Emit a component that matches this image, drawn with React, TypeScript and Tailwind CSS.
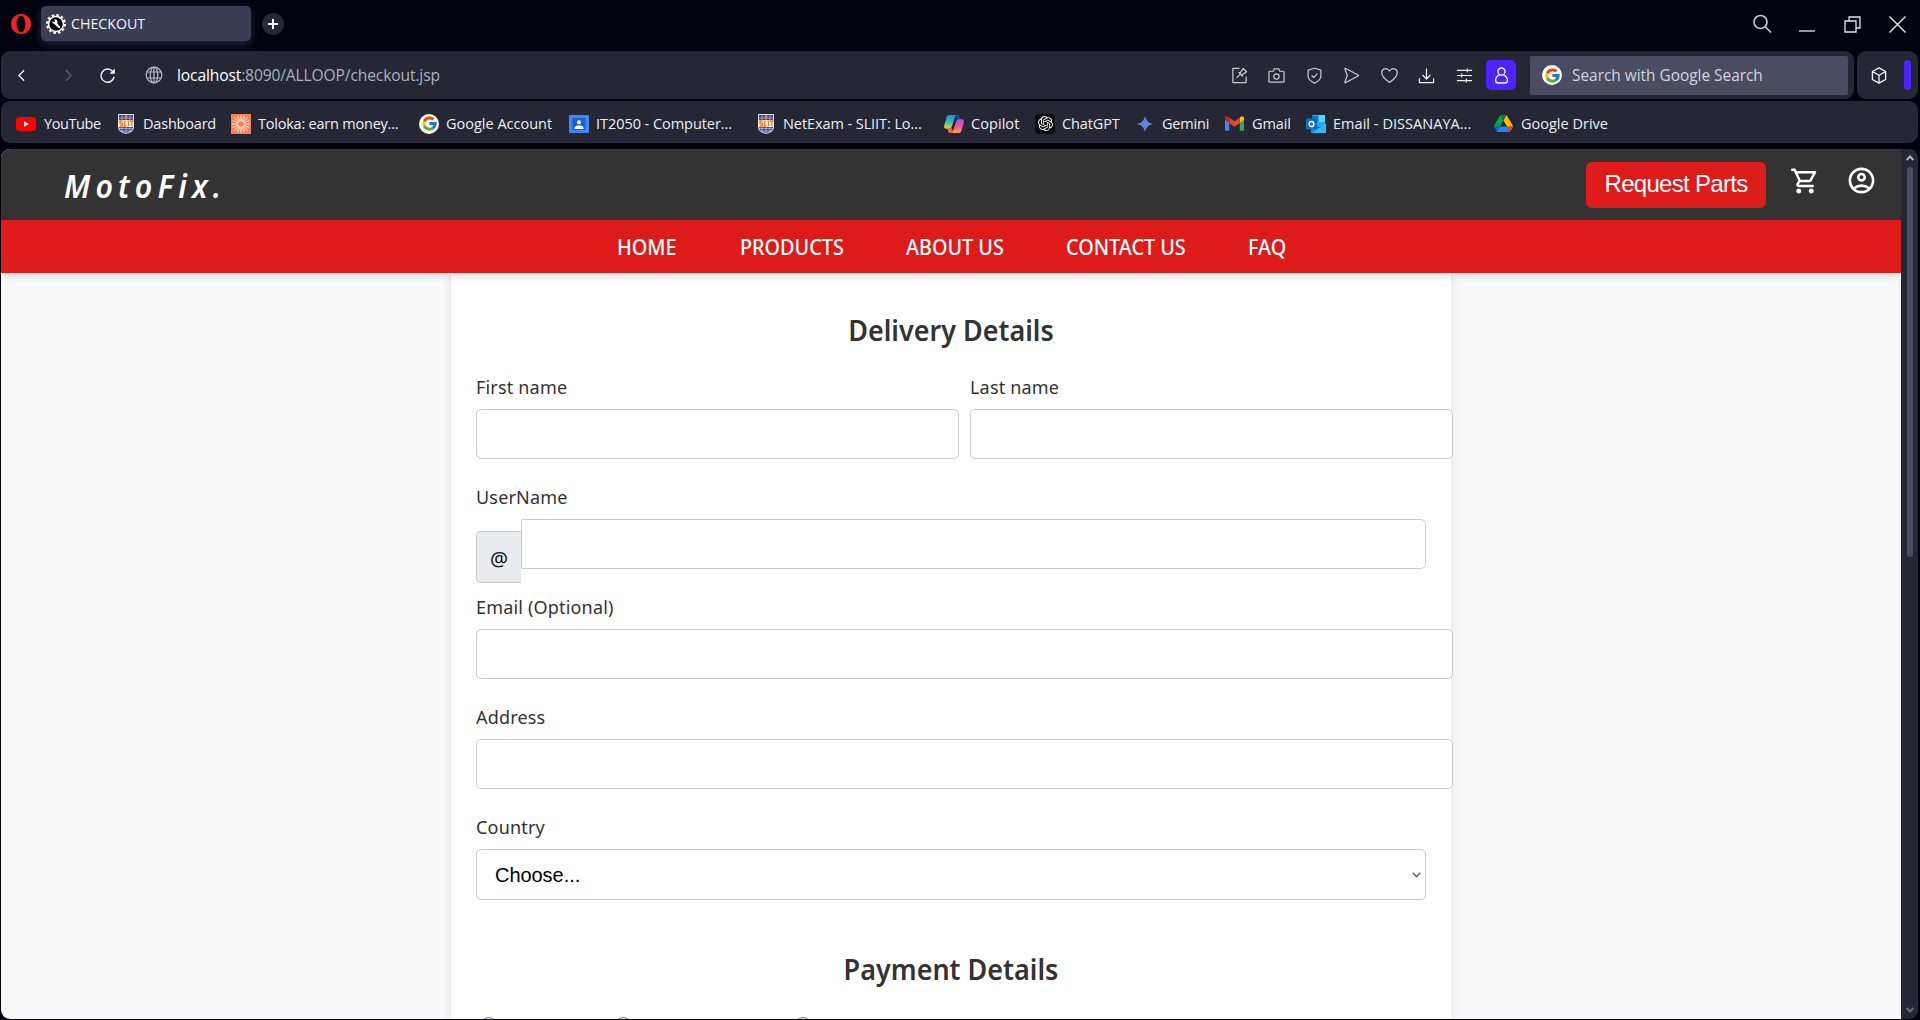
import type { ReactNode } from 'react';
import { MdOutlineShoppingCart, MdOutlineAccountCircle } from 'react-icons/md';
import { FcGoogle } from 'react-icons/fc';
import { SiOpenai } from 'react-icons/si';

const OperaLogo = () => (
  <svg viewBox="0 0 20 20" className="h-5 w-5">
    <path
      fillRule="evenodd"
      fill="#fa1e2d"
      d="M10 0C4.2 0 0 4.5 0 10s4.2 10 10 10 10-4.500 10-10S15.800 0 10 0ZM10 1.800c2.700 0 4.400 3.500 4.400 8.200s-1.700 8.200-4.400 8.200-4.400-3.500-4.400-8.200 1.700-8.200 4.400-8.200Z"
    />
  </svg>
);

const GearFavicon = () => (
  <svg viewBox="0 0 20 20" className="h-5 w-5">
    <circle cx="10" cy="10" r="8.900" fill="none" stroke="#fff" strokeWidth="2.200" strokeDasharray="2.600 2.060" />
    <circle cx="10" cy="10" r="7.400" fill="#000" stroke="#fff" strokeWidth="1.500" />
    <path d="M9.500 9.500l3.500 3.500" stroke="#fff" strokeWidth="2.400" strokeLinecap="round" />
    <path d="M6.200 7.300l2 .8.900-.9-1-2a3 3 0 0 1 3.200 4.200 3 3 0 0 1-5.100-2.100Z" fill="#fff" />
  </svg>
);

const YouTubeIcon = () => (
  <svg viewBox="0 0 20 14" className="h-[14px] w-5">
    <rect width="20" height="14" rx="3.500" fill="#f00" />
    <path d="M8 4.200v5.600l4.800-2.800Z" fill="#fff" />
  </svg>
);

const ShieldCrest = () => (
  <svg viewBox="0 0 16 20" className="h-5 w-4">
    <path d="M0 0h16v13c0 4-4 6-8 7-4-1-8-3-8-7Z" fill="#d9d9e8" />
    <path d="M1 1h14v12c0 3.500-3.500 5-7 6-3.500-1-7-2.500-7-6Z" fill="#39409a" />
    <path d="M4 1v17M8 1v18M12 1v17M1 4h14M1 14.500h14M3 17h10" stroke="#c4c6dc" strokeWidth=".7" />
    <circle cx="8" cy="3" r="1.800" fill="#f08222" />
    <rect y="6" width="16" height="7" fill="#f7e9de" />
    <path d="M4.500 7H2v2.500h2.500V12H1.800M6.700 6.500V12h1.800M10.500 6.500V12M12 7h3.500M13.800 7v5" stroke="#ee7d24" strokeWidth="1.300" fill="none" />
  </svg>
);

const TolokaIcon = () => (
  <svg viewBox="0 0 20 20" className="h-5 w-5">
    <rect width="20" height="20" fill="#ff7f50" />
    <g stroke="#ffe3d6" strokeWidth="1.100">
      <path d="M10 1v18M1 10h18M3.600 3.600l12.800 12.800M16.400 3.600L3.600 16.400M6.500 1.700l7 16.600M13.500 1.700l-7 16.600M1.700 6.500l16.600 7M1.700 13.500l16.600-7" />
    </g>
    <circle cx="10" cy="10" r="2.800" fill="#ff7f50" />
  </svg>
);

const GoogleBadge = () => (
  <span className="flex h-5 w-5 items-center justify-center rounded-full bg-white">
    <FcGoogle size={17} />
  </span>
);

const ClassroomIcon = () => (
  <svg viewBox="0 0 20 18" className="h-[18px] w-5">
    <rect width="20" height="18" rx="1" fill="#4285f4" />
    <rect x="3.500" y="3" width="13" height="12" fill="#1a5fd0" />
    <circle cx="10" cy="7.200" r="2" fill="#fff" />
    <path d="M5.500 14v-1c0-1.800 2.300-2.700 4.500-2.700s4.500.9 4.500 2.700v1Z" fill="#fff" />
  </svg>
);

const CopilotIcon = () => (
  <svg viewBox="0 0 20 18" className="h-[18px] w-5">
    <defs>
      <linearGradient id="cpA" x1="0" y1="0" x2="0" y2="1">
        <stop offset="0" stopColor="#1b8ff2" />
        <stop offset=".5" stopColor="#35bfb2" />
        <stop offset="1" stopColor="#f3d31c" />
      </linearGradient>
      <linearGradient id="cpB" x1="0" y1="0" x2="0" y2="1">
        <stop offset="0" stopColor="#a855f7" />
        <stop offset=".5" stopColor="#ee5090" />
        <stop offset="1" stopColor="#ffa04a" />
      </linearGradient>
    </defs>
    <path d="M12.500 0h1.200c1 0 1.500.7 1.800 1.700l.7 2.300h-3.400Z" fill="#1648b8" />
    <path d="M5.500 0H13c-1 0-1.600.8-2 2L7.800 11.500c-.5 1.500-1.300 2.300-2.800 2.300H2.500C.5 13.800-.3 12.300.2 10.500L2.600 2.300C3 .8 4 0 5.500 0Z" fill="url(#cpA)" />
    <path d="M14.500 18H7c1 0 1.600-.8 2-2l3.200-9.500c.5-1.500 1.300-2.300 2.800-2.300h2.500c2 0 2.800 1.500 2.300 3.300l-2.400 8.200C17 17.200 16 18 14.500 18Z" fill="url(#cpB)" />
    <path d="M7 18H6c-1 0-1.500-.8-1.800-1.700l-.8-2.500h1.700c1 0 1.700-.4 2.200-1.200L9 16c-.4 1.200-1 2-2 2Z" fill="#f46a3a" />
  </svg>
);

const ChatGptIcon = () => (
  <span className="flex h-5 w-5 items-center justify-center rounded bg-[#0d0d0d] text-white">
    <SiOpenai size={15} />
  </span>
);

const GeminiIcon = () => (
  <svg viewBox="0 0 16 16" className="h-4 w-4">
    <defs>
      <linearGradient id="gem" x1="0" y1="1" x2="1" y2="0">
        <stop offset="0" stopColor="#9b72cb" />
        <stop offset=".5" stopColor="#5c84dd" />
        <stop offset="1" stopColor="#4fa0dd" />
      </linearGradient>
    </defs>
    <path d="M8 0c1 4.600 3.400 7 8 8-4.600 1-7 3.400-8 8-1-4.600-3.400-7-8-8 4.600-1 7-3.400 8-8Z" fill="url(#gem)" />
  </svg>
);

const GmailIcon = () => (
  <svg viewBox="0 0 20 15" className="h-[15px] w-[19px]">
    <path d="M0 2v12c0 .6.400 1 1 1h3.500V5.500Z" fill="#4285f4" />
    <path d="M20 2v12c0 .6-.4 1-1 1h-3.500V5.500Z" fill="#34a853" />
    <path d="M15.500 1.200v5.800L20 3.600V2c0-1.800-2-2.600-3.300-1.600Z" fill="#fbbc04" />
    <path d="M4.500 7V1.200L10 5.400l5.500-4.200V7L10 11.200Z" fill="#ea4335" />
    <path d="M0 2v1.600L4.500 7V1.200L3.300.4C2-.6 0 .2 0 2Z" fill="#c5221f" />
  </svg>
);

const OutlookIcon = () => (
  <svg viewBox="0 0 20 18" className="h-[18px] w-5">
    <rect x="6" width="13" height="12" rx="1" fill="#28a8ea" />
    <path d="M6 1h6.500v6H6Z" fill="#0078d4" />
    <path d="M12.500 0H18c.6 0 1 .4 1 1v6h-6.500Z" fill="#50d9ff" />
    <path d="M5 8.500l7.500 4.500L20 8.500V17c0 .6-.4 1-1 1H6c-.6 0-1-.4-1-1Z" fill="#1490df" />
    <path d="M20 8.500L6 18h13c.6 0 1-.4 1-1Z" fill="#35b8f1" />
    <rect y="3.500" width="11" height="11" rx="1" fill="#0f6cbd" />
    <ellipse cx="5.500" cy="9" rx="2.300" ry="2.600" fill="none" stroke="#fff" strokeWidth="1.500" />
  </svg>
);

const DriveIcon = () => (
  <svg viewBox="0 0 87.300 78" className="h-[17px] w-[19px]">
    <path d="m6.600 66.850 3.850 6.650c.8 1.400 1.950 2.500 3.300 3.300l13.750-23.800h-27.500c0 1.550.4 3.100 1.200 4.500z" fill="#0066da" />
    <path d="m43.650 25-13.750-23.800c-1.350.8-2.500 1.900-3.300 3.300l-25.400 44a9.060 9.060 0 0 0 -1.200 4.500h27.500z" fill="#00ac47" />
    <path d="m73.550 76.800c1.350-.8 2.500-1.900 3.300-3.300l1.600-2.750 7.650-13.250c.8-1.400 1.200-2.950 1.200-4.500h-27.502l5.852 11.500z" fill="#ea4335" />
    <path d="m43.650 25 13.750-23.800c-1.350-.8-2.900-1.200-4.500-1.200h-18.500c-1.600 0-3.150.45-4.500 1.200z" fill="#00832d" />
    <path d="m59.800 53h-32.300l-13.750 23.800c1.350.8 2.900 1.200 4.500 1.200h50.800c1.600 0 3.150-.45 4.500-1.200z" fill="#2684fc" />
    <path d="m73.400 26.500-12.700-22c-.8-1.400-1.950-2.500-3.300-3.300l-13.750 23.800 16.150 28h27.450c0-1.550-.4-3.100-1.200-4.500z" fill="#ffba00" />
  </svg>
);

/* Thin line icons of the browser's toolbar, drawn on an 18px grid. */
const Line = ({ children, className = 'text-[#c9cbd3]' }: { children: ReactNode; className?: string }) => (
  <span className={`flex w-[37.500px] shrink-0 justify-center ${className}`}>
    <svg viewBox="0 0 18 18" className="h-[17px] w-[17px] overflow-visible" fill="none" stroke="currentColor" strokeWidth="1.300" strokeLinejoin="round">
      {children}
    </svg>
  </span>
);

const Globe = () => (
  <svg viewBox="0 0 18 18" className="h-[18px] w-[18px] overflow-visible" fill="none" stroke="#b4b7c1" strokeWidth="1.200">
    <circle cx="9" cy="9" r="7.800" />
    <ellipse cx="9" cy="9" rx="3.800" ry="7.800" />
    <path d="M9 1.200v15.600M2 6h14M2 12h14" />
  </svg>
);

type Bookmark = { label: string; icon: ReactNode; item: string; slot: string; text: string };

const bookmarks: Bookmark[] = [
  { label: 'YouTube', icon: <YouTubeIcon />, item: 'w-[102px]', slot: 'w-[28px]', text: 'tracking-[-0.400px]' },
  { label: 'Dashboard', icon: <ShieldCrest />, item: 'w-[113px]', slot: 'w-[25px]', text: 'tracking-[-0.200px]' },
  { label: 'Toloka: earn money...', icon: <TolokaIcon />, item: 'w-[188px]', slot: 'w-[27px]', text: 'tracking-[-0.220px]' },
  { label: 'Google Account', icon: <GoogleBadge />, item: 'w-[150px]', slot: 'w-[27px]', text: 'tracking-[0px]' },
  { label: 'IT2050 - Computer...', icon: <ClassroomIcon />, item: 'w-[189px]', slot: 'w-[27px]', text: 'tracking-[-0.050px]' },
  { label: 'NetExam - SLIIT: Lo...', icon: <ShieldCrest />, item: 'w-[186px]', slot: 'w-[25px]', text: 'tracking-[-0.080px]' },
  { label: 'Copilot', icon: <CopilotIcon />, item: 'w-[91px]', slot: 'w-[27px]', text: 'tracking-[0.060px]' },
  { label: 'ChatGPT', icon: <ChatGptIcon />, item: 'w-[102px]', slot: 'w-[27px]', text: 'tracking-[-0.130px]' },
  { label: 'Gemini', icon: <GeminiIcon />, item: 'w-[88px]', slot: 'w-[25px]', text: 'tracking-[-0.200px]' },
  { label: 'Gmail', icon: <GmailIcon />, item: 'w-[81px]', slot: 'w-[27px]', text: 'tracking-[-0.130px]' },
  { label: 'Email - DISSANAYA...', icon: <OutlookIcon />, item: 'w-[188px]', slot: 'w-[27px]', text: 'tracking-[0.040px]' },
  { label: 'Google Drive', icon: <DriveIcon />, item: 'w-[120px]', slot: 'w-[27px]', text: 'tracking-[0px]' },
];

const TabStrip = () => (
  <div className="flex h-[51px] items-start">
    <div className="mt-[14px] ml-[11px]">
      <OperaLogo />
    </div>
    <div className="mt-[6px] ml-[10px] flex h-[35px] w-[210px] items-center rounded-[5px] bg-[#3a3d53] pl-[5px] shadow-[0_3px_8px_rgba(80,84,112,0.45)]">
      <GearFavicon />
      <span className="ml-[5px] text-[14.200px] text-[#f2f3f6]">CHECKOUT</span>
    </div>
    <div className="mt-[13px] ml-[11px] flex h-[22px] w-[22px] items-center justify-center rounded-full bg-[#252834]">
      <svg viewBox="0 0 10 10" className="h-[10px] w-[10px]" stroke="#fff" strokeWidth="2">
        <path d="M5 0v10M0 5h10" />
      </svg>
    </div>
    <div className="mt-[13px] mr-[14.500px] ml-auto flex h-[22px] items-center text-[#e6e7ea]">
      <svg viewBox="0 0 20 20" className="mr-[27px] h-[20px] w-[20px]" fill="none" stroke="#c4c6cd" strokeWidth="1.700">
        <circle cx="8.500" cy="8" r="6.500" />
        <path d="M13 12.500l6 6" />
      </svg>
      <svg viewBox="0 0 16 18" className="mr-[29px] h-[18px] w-4" stroke="currentColor" strokeWidth="1.300">
        <path d="M0 16h16" />
      </svg>
      <svg viewBox="0 0 17 17" className="mr-[28px] h-[17px] w-[17px]" fill="none" stroke="currentColor" strokeWidth="1.300">
        <path d="M1 5h11v11H1ZM5 5V1h11v11h-4" />
      </svg>
      <svg viewBox="0 0 17 17" className="h-[17px] w-[17px]" stroke="currentColor" strokeWidth="1.400">
        <path d="M.5.5l16 16M16.500.5l-16 16" />
      </svg>
    </div>
  </div>
);

const AddressBar = () => (
  <div className="flex h-[48px] gap-[3px] pr-[2px] pl-px">
    <div className="flex flex-1 items-center rounded-[9px] bg-[#252834]">
      <svg viewBox="0 0 8 14" className="ml-[17px] h-[13px] w-[7px]" fill="none" stroke="#f0f1f4" strokeWidth="1.600">
        <path d="M7 1L1 7l6 6" />
      </svg>
      <svg viewBox="0 0 8 14" className="ml-[40px] h-[13px] w-[7px]" fill="none" stroke="#5e616d" strokeWidth="1.500">
        <path d="M1 1l6 6-6 6" />
      </svg>
      <svg viewBox="0 0 16 16" className="ml-[28px] h-[15px] w-[15px] overflow-visible" fill="none" stroke="#f0f1f4" strokeWidth="1.600">
        <path d="M15 9.500A7 7 0 1 1 13.500 3.700" />
        <path d="M15.800.6v5.600h-5.600Z" fill="#f0f1f4" stroke="none" />
      </svg>
      <div className="ml-[30px]">
        <Globe />
      </div>
      <span className="ml-[14px] pt-[2px] text-[15.600px] tracking-[-0.130px] text-[#a9b0bf]">
        <span className="text-white">localhost</span>:8090/ALLOOP/checkout.jsp
      </span>
      <div className="ml-auto flex items-center">
        <Line>
          <path d="M9 1.500H2v15h14V10M6 11.500l4-4M8 5.500l4.500 4.500M9.500 6.500L13 1.500l3.500 3.500-5 3.500" />
        </Line>
        <Line>
          <path d="M2 4.500h3.500l1-2.500h5l1 2.500H16a1 1 0 0 1 1 1V15a1 1 0 0 1-1 1H2a1 1 0 0 1-1-1V5.500a1 1 0 0 1 1-1Z" />
          <circle cx="9" cy="10" r="2.800" />
        </Line>
        <Line>
          <path d="M9 1.300l6.800 2V9c0 4-3 6.500-6.800 8-3.800-1.500-6.800-4-6.800-8V3.300ZM6 9l2.200 2.300L12 7" />
        </Line>
        <Line>
          <path d="M2 2.200c-.3-.8.200-1 1-.7l13 7c.6.300.6.700 0 1l-13 7c-.8.300-1.300.1-1-.7L4.500 9Z" />
        </Line>
        <Line>
          <path d="M9 16.500C4 13 .8 9.500.8 5.900.8 1.500 6.500.2 9 4.200 11.500.2 17.200 1.500 17.200 5.900c0 3.600-3.200 7.100-8.200 10.600Z" />
        </Line>
        <Line className="text-[#eceded]">
          <path d="M9 1.500v11M4.800 8.500L9 12.700l4.200-4.200M1.500 12v4.500h15V12" />
        </Line>
        <Line className="text-[#eceded]">
          <path d="M1 3.500h16M1 9h16M1 14.500h16M12 1.500v4M6 7v4M11 12.500v4" />
        </Line>
        <span className="ml-[3px] flex h-[30px] w-[30px] items-center justify-center rounded-[5px] bg-[#4d22fb]">
          <svg viewBox="0 0 16 18" className="h-[17px] w-[15px]" fill="none" stroke="#fff" strokeWidth="1.400">
            <circle cx="8" cy="4.800" r="3.800" />
            <path d="M6 8.300C3 9.500 1.700 12 1.700 14c0 2 1 3 2.800 3h7c1.800 0 2.800-1 2.800-3 0-2-1.300-4.500-4.300-5.700" />
          </svg>
        </span>
        <div className="mr-[6px] ml-[14px] flex h-[39px] w-[318px] items-center rounded-[2px] bg-[#4a4d62] pl-[12px]">
          <GoogleBadge />
          <span className="ml-[10px] pt-[2px] text-[15.400px] text-[#d3d4da]">Search with Google Search</span>
        </div>
      </div>
    </div>
    <div className="flex w-[61px] items-center rounded-[9px] bg-[#252834]">
      <svg viewBox="0 0 16 18" className="ml-[14px] h-[17px] w-4" fill="none" stroke="#f0f1f4" strokeWidth="1.400" strokeLinejoin="round">
        <path d="M8 1l7 3.800v8.400L8 17l-7-3.800V4.800ZM1 4.800l7 3.900 7-3.900M8 8.700V17" />
      </svg>
      <span className="ml-[17px] h-[30px] w-[7px] rounded-[4px] bg-[#4d22fb]" />
    </div>
  </div>
);

const BookmarksBar = () => (
  <div className="mt-[2px] mr-[2px] ml-px flex h-[42px] items-center rounded-[9px] bg-[#252834] pt-[3px] pl-[15px]">
    {bookmarks.map((b) => (
      <div key={b.label} className={`flex shrink-0 items-center ${b.item}`}>
        <span className={`flex shrink-0 items-center ${b.slot}`}>{b.icon}</span>
        <span className={`pt-px text-[14.500px] whitespace-nowrap text-[#eceef2] ${b.text}`}>{b.label}</span>
      </div>
    ))}
  </div>
);

const navLinks = [
  { label: 'HOME', width: 'w-[123px]' },
  { label: 'PRODUCTS', width: 'w-[166px]' },
  { label: 'ABOUT US', width: 'w-[160px]' },
  { label: 'CONTACT US', width: 'w-[182px]' },
  { label: 'FAQ', width: 'w-[38px]' },
];

const SiteHeader = () => (
  <header className="relative z-10 shrink-0 shadow-[0_4px_8px_rgba(0,0,0,0.1)]">
    <div className="flex h-[71px] items-start bg-[#333]">
      <span className="mt-[15px] ml-[63px] origin-left scale-x-[0.92] text-[33px] leading-[44px] font-semibold tracking-[5.600px] text-white italic">
        MotoFix.
      </span>
      <button className="mt-[13px] ml-auto h-[46px] w-[180px] rounded-[6px] bg-[#dd1b1b] pb-[2px] font-['Liberation_Sans'] text-[24px] leading-none tracking-[-0.700px] text-white">
        Request Parts
      </button>
      <MdOutlineShoppingCart className="mt-[17px] ml-[24px] text-white" size={30} />
      <MdOutlineAccountCircle className="mt-[16px] mr-[24px] ml-[26px] text-white" size={31} />
    </div>
    <nav className="flex h-[53px] bg-[#dd1b1b] pl-[616px]">
      {navLinks.map((l) => (
        <a key={l.label} className={`h-[53px] text-[22px] leading-[53px] font-medium whitespace-nowrap text-white ${l.width}`}>
          <span className="inline-block origin-left scale-x-[0.9]">{l.label}</span>
        </a>
      ))}
    </nav>
  </header>
);

const Label = ({ children }: { children: ReactNode }) => (
  <label className="block h-6 text-[18px] leading-6 tracking-[0.180px] text-[#333]">{children}</label>
);

const Heading = ({ children }: { children: ReactNode }) => (
  <h2 className="flex h-10 scale-x-[0.93] items-center justify-center text-[29px] leading-10 font-semibold text-[#333]">{children}</h2>
);

const Field = ({ label, width }: { label: string; width: string }) => (
  <div className="shrink-0">
    <Label>{label}</Label>
    <input className={`mt-[10px] block h-[50px] rounded-[5px] border border-[#ccc] bg-white ${width}`} />
  </div>
);

const PayOption = ({ label, width }: { label: string; width: string }) => (
  <span className={`flex items-start text-[18px] leading-6 tracking-[0.400px] whitespace-nowrap text-[#333] ${width}`}>
    <span className="mt-[4px] mr-[6px] h-4 w-4 rounded-full border border-[#767676]" />
    <span className="pt-px">{label}</span>
  </span>
);

const CheckoutForm = () => (
  <form className="ml-[450px] h-[900px] w-[1000px] bg-white px-[25px] pt-[37px] shadow-[0_0_10px_rgba(0,0,0,0.1)]">
    <Heading>Delivery Details</Heading>
    <div className="mt-[25px] flex gap-[11px]">
      <Field label="First name" width="w-[483px]" />
      <Field label="Last name" width="w-[483px]" />
    </div>
    <div className="mt-[26px]">
      <Label>UserName</Label>
      <div className="mt-[10px] flex h-[64px]">
        <span className="mt-[12px] flex h-[52px] w-[45px] items-center justify-center rounded-l-[5px] border border-r-0 border-[#ccc] bg-[#e9ecef] pt-[3px] text-[20px] leading-none text-[#111]">
          @
        </span>
        <input className="h-[50px] w-[905px] rounded-r-[5px] border border-[#ccc] bg-white" />
      </div>
    </div>
    <div className="mt-[12px]">
      <Field label="Email (Optional)" width="w-[977px]" />
    </div>
    <div className="mt-[26px]">
      <Field label="Address" width="w-[977px]" />
    </div>
    <div className="mt-[26px]">
      <Label>Country</Label>
      <div className="mt-[10px] flex h-[51px] items-center justify-between rounded-[5px] border border-[#ccc] bg-white pr-[4px] pl-[18px] font-['Liberation_Sans'] text-[20px] tracking-[-0.050px] text-black">
        Choose...
        <svg viewBox="0 0 9 6" className="h-[6px] w-[9px]" fill="none" stroke="#666" strokeWidth="1.500">
          <path d="M.7.8l3.800 3.800L8.300.8" />
        </svg>
      </div>
    </div>
    <div className="mt-[49px]">
      <Heading>Payment Details</Heading>
    </div>
    <div className="mt-[24px] flex pl-[5px]">
      <PayOption label="Credit card" width="w-[134px]" />
      <PayOption label="Cash on delivery" width="w-[180px]" />
      <PayOption label="PayPal" width="w-[90px]" />
    </div>
  </form>
);

export default function App() {
  return (
    <div className="flex h-[1020px] w-[1920px] flex-col overflow-hidden bg-[#01030f] font-['Open_Sans',sans-serif]">
      <TabStrip />
      <AddressBar />
      <BookmarksBar />
      <div className="mt-[6px] mr-[2px] mb-px ml-px flex h-[870px] overflow-hidden rounded-[9px]">
        <main className="flex w-[1900px] flex-col overflow-hidden bg-[#f9f9f9] font-['Noto_Sans',sans-serif]">
          <SiteHeader />
          <CheckoutForm />
        </main>
        <aside className="flex flex-1 flex-col items-center bg-[#252834]">
          <svg viewBox="0 0 8 6" className="mt-[6px] h-[6px] w-[8px]" fill="none" stroke="#b6b8bf" strokeWidth="2">
            <path d="M.7 5L4 1.500 7.300 5" />
          </svg>
          <span className="mt-[6px] h-[390px] w-[6px] rounded-full bg-[#4a4d62]" />
          <svg viewBox="0 0 8 6" className="mt-auto mb-[6px] h-[6px] w-[8px]" fill="none" stroke="#6d6f76" strokeWidth="2">
            <path d="M.7 1L4 4.500 7.300 1" />
          </svg>
        </aside>
      </div>
    </div>
  );
}
